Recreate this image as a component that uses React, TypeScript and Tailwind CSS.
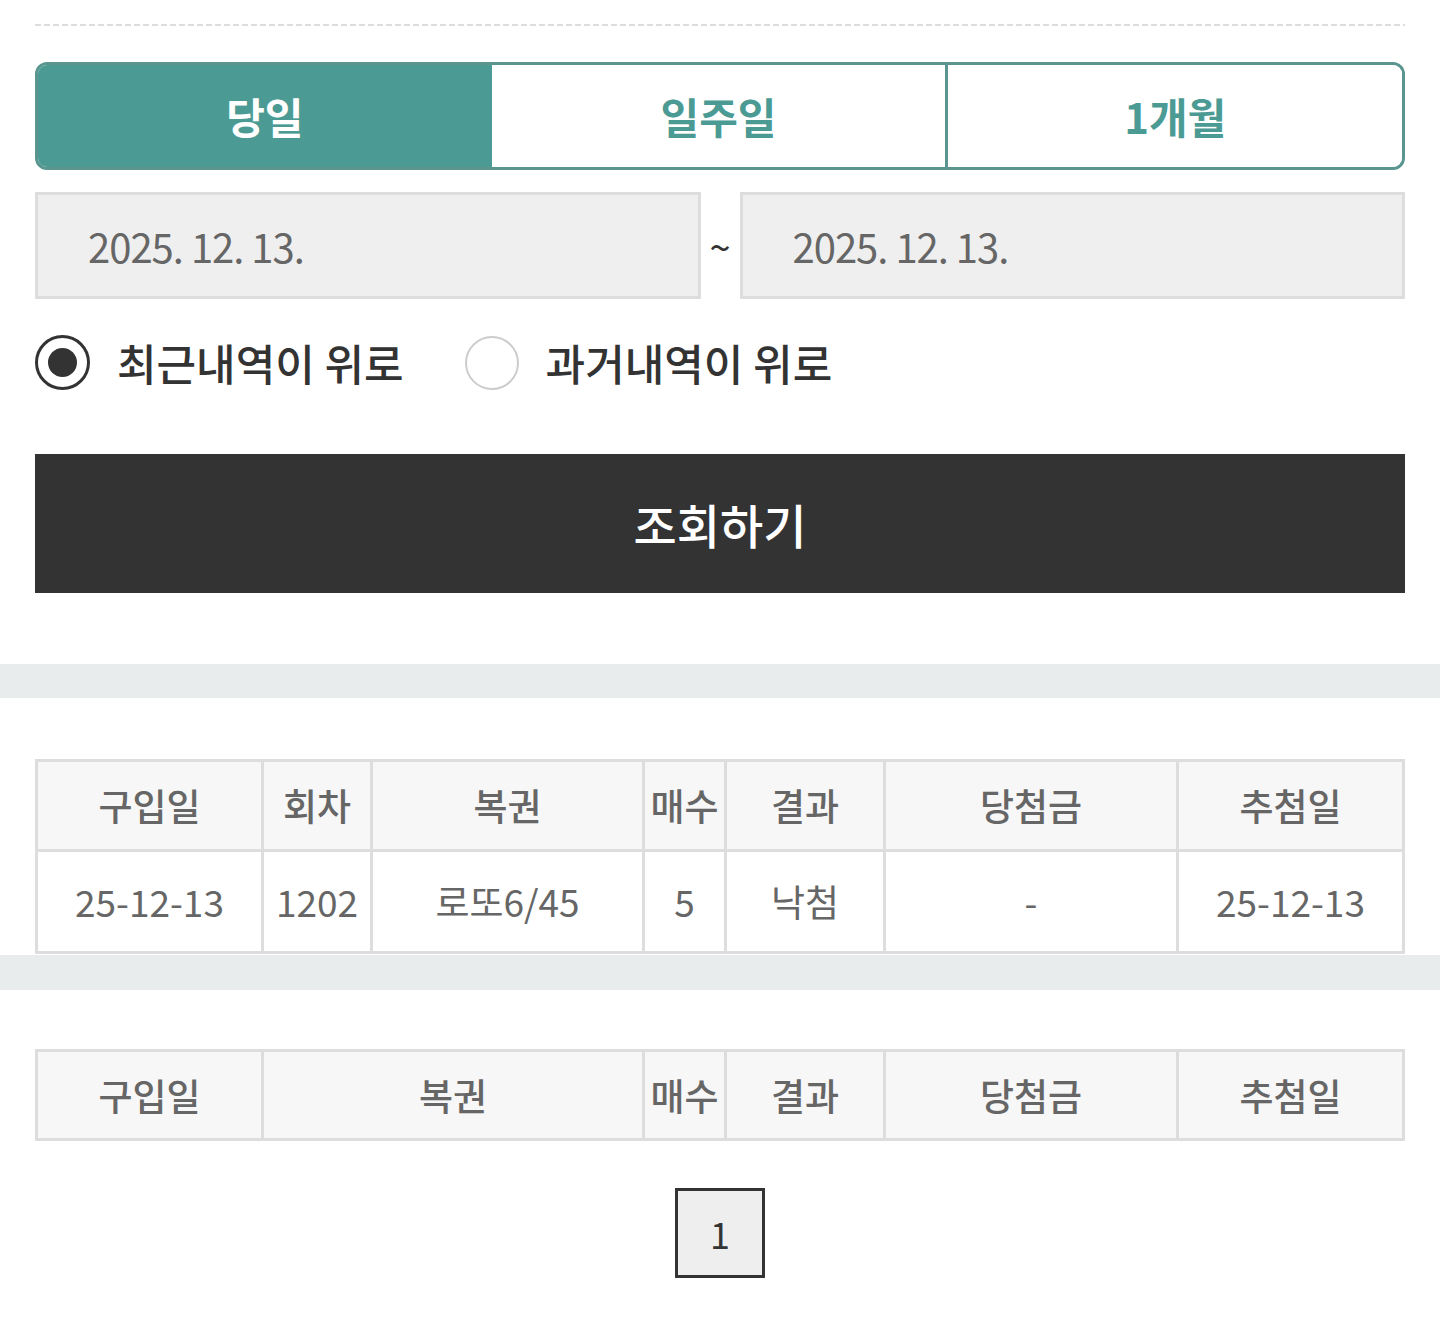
import { useState } from "react"

const font = "font-['Noto_Sans_CJK_KR','Noto_Sans',sans-serif]"

const cols1 = ["구입일", "회차", "복권", "매수", "결과", "당첨금", "추첨일"]
const row1 = ["25-12-13", "1202", "로또6/45", "5", "낙첨", "-", "25-12-13"]
const cols2 = ["구입일", "복권", "매수", "결과", "당첨금", "추첨일"]

function Band() {
  return <div className="h-[35px] w-full bg-[#e9ecec]" />
}

export default function App() {
  const [period, setPeriod] = useState("당일")
  const [order, setOrder] = useState("recent")

  return (
    <div className={`min-h-[1332px] w-[1440px] bg-white ${font}`}>
      {/* 조회 조건 */}
      <section className="px-[35px] pt-[24px]">
        <div className="h-[2px] w-full bg-[repeating-linear-gradient(90deg,#dddddd_0_6px,transparent_6px_9px)]" />

        <div className="mt-[36px] flex h-[108px] overflow-hidden rounded-[12px] border-[3px] border-[#5a968f]">
          {["당일", "일주일", "1개월"].map((p, i) => (
            <button
              key={p}
              onClick={() => setPeriod(p)}
              className={`flex flex-1 items-center justify-center text-[42px] font-semibold leading-none ${
                i === 2 ? "border-l-[3px] border-[#5a968f]" : ""
              } ${period === p ? "bg-[#4b9b94] text-white" : "bg-white text-[#4b9b94]"}`}
            >
              {p}
            </button>
          ))}
        </div>

        <div className="mt-[22px] flex items-center">
          <div className="flex h-[107px] flex-1 items-center border-[3px] border-[#dddddd] bg-[#efefef] pl-[50px] text-[40px] tracking-[-1px] text-[#666]">
            2025. 12. 13.
          </div>
          <span className="w-[39px] text-center text-[38px] leading-none text-[#333]">~</span>
          <div className="flex h-[107px] flex-1 items-center border-[3px] border-[#dddddd] bg-[#efefef] pl-[50px] text-[40px] tracking-[-1px] text-[#666]">
            2025. 12. 13.
          </div>
        </div>

        <div className="mt-[36px] flex h-[55px] items-center">
          <button onClick={() => setOrder("recent")} className="flex items-center">
            <span
              className={`flex h-[55px] w-[55px] items-center justify-center rounded-full ${
                order === "recent" ? "border-[3px] border-[#333]" : "border-2 border-[#cccccc]"
              }`}
            >
              {order === "recent" && <span className="h-[29px] w-[29px] rounded-full bg-[#333]" />}
            </span>
            <span className="ml-[27px] text-[43px] font-medium leading-none text-[#333]">최근내역이 위로</span>
          </button>
          <button onClick={() => setOrder("past")} className="ml-[61px] flex items-center">
            <span
              className={`flex h-[54px] w-[54px] items-center justify-center rounded-full ${
                order === "past" ? "border-[3px] border-[#333]" : "border-2 border-[#cccccc]"
              }`}
            >
              {order === "past" && <span className="h-[29px] w-[29px] rounded-full bg-[#333]" />}
            </span>
            <span className="ml-[27px] text-[43px] font-medium leading-none text-[#333]">과거내역이 위로</span>
          </button>
        </div>

        <button className="mt-[64px] flex h-[139px] w-full items-center justify-center bg-[#333] text-[47px] font-medium leading-none text-white">
          조회하기
        </button>
      </section>

      <div className="mt-[71px]">
        <div className="h-[34px] w-full bg-[#e9ecec]" />
      </div>

      {/* 구매 내역 */}
      <section className="mt-[61px] px-[35px]">
        <div className="grid grid-cols-[226px_109px_272px_82px_159px_293px_226px] border-l-[3px] border-t-[3px] border-[#dddddd] text-[37px] text-[#666]">
          {cols1.map((c) => (
            <div
              key={c}
              className="flex h-[90px] items-center justify-center border-b-[3px] border-r-[3px] border-[#dddddd] bg-[#f7f7f7] font-medium leading-none"
            >
              {c}
            </div>
          ))}
          {row1.map((c, i) => (
            <div
              key={i}
              className="flex h-[102px] items-center justify-center border-b-[3px] border-r-[3px] border-[#dddddd] bg-white leading-none"
            >
              {c}
            </div>
          ))}
        </div>
      </section>

      <div className="mt-[1px]">
        <Band />
      </div>

      <section className="mt-[59px] px-[35px]">
        <div className="grid grid-cols-[226px_381px_82px_159px_293px_226px] border-l-[3px] border-t-[3px] border-[#dddddd] text-[37px] text-[#666]">
          {cols2.map((c) => (
            <div
              key={c}
              className="flex h-[89px] items-center justify-center border-b-[3px] border-r-[3px] border-[#dddddd] bg-[#f7f7f7] font-medium leading-none"
            >
              {c}
            </div>
          ))}
        </div>

        <div className="mt-[47px] flex justify-center pb-[54px]">
          <button className="flex h-[90px] w-[90px] items-center justify-center border-[3px] border-[#333] bg-[#eeeeee] text-[36px] leading-none text-[#333]">
            1
          </button>
        </div>
      </section>
    </div>
  )
}
